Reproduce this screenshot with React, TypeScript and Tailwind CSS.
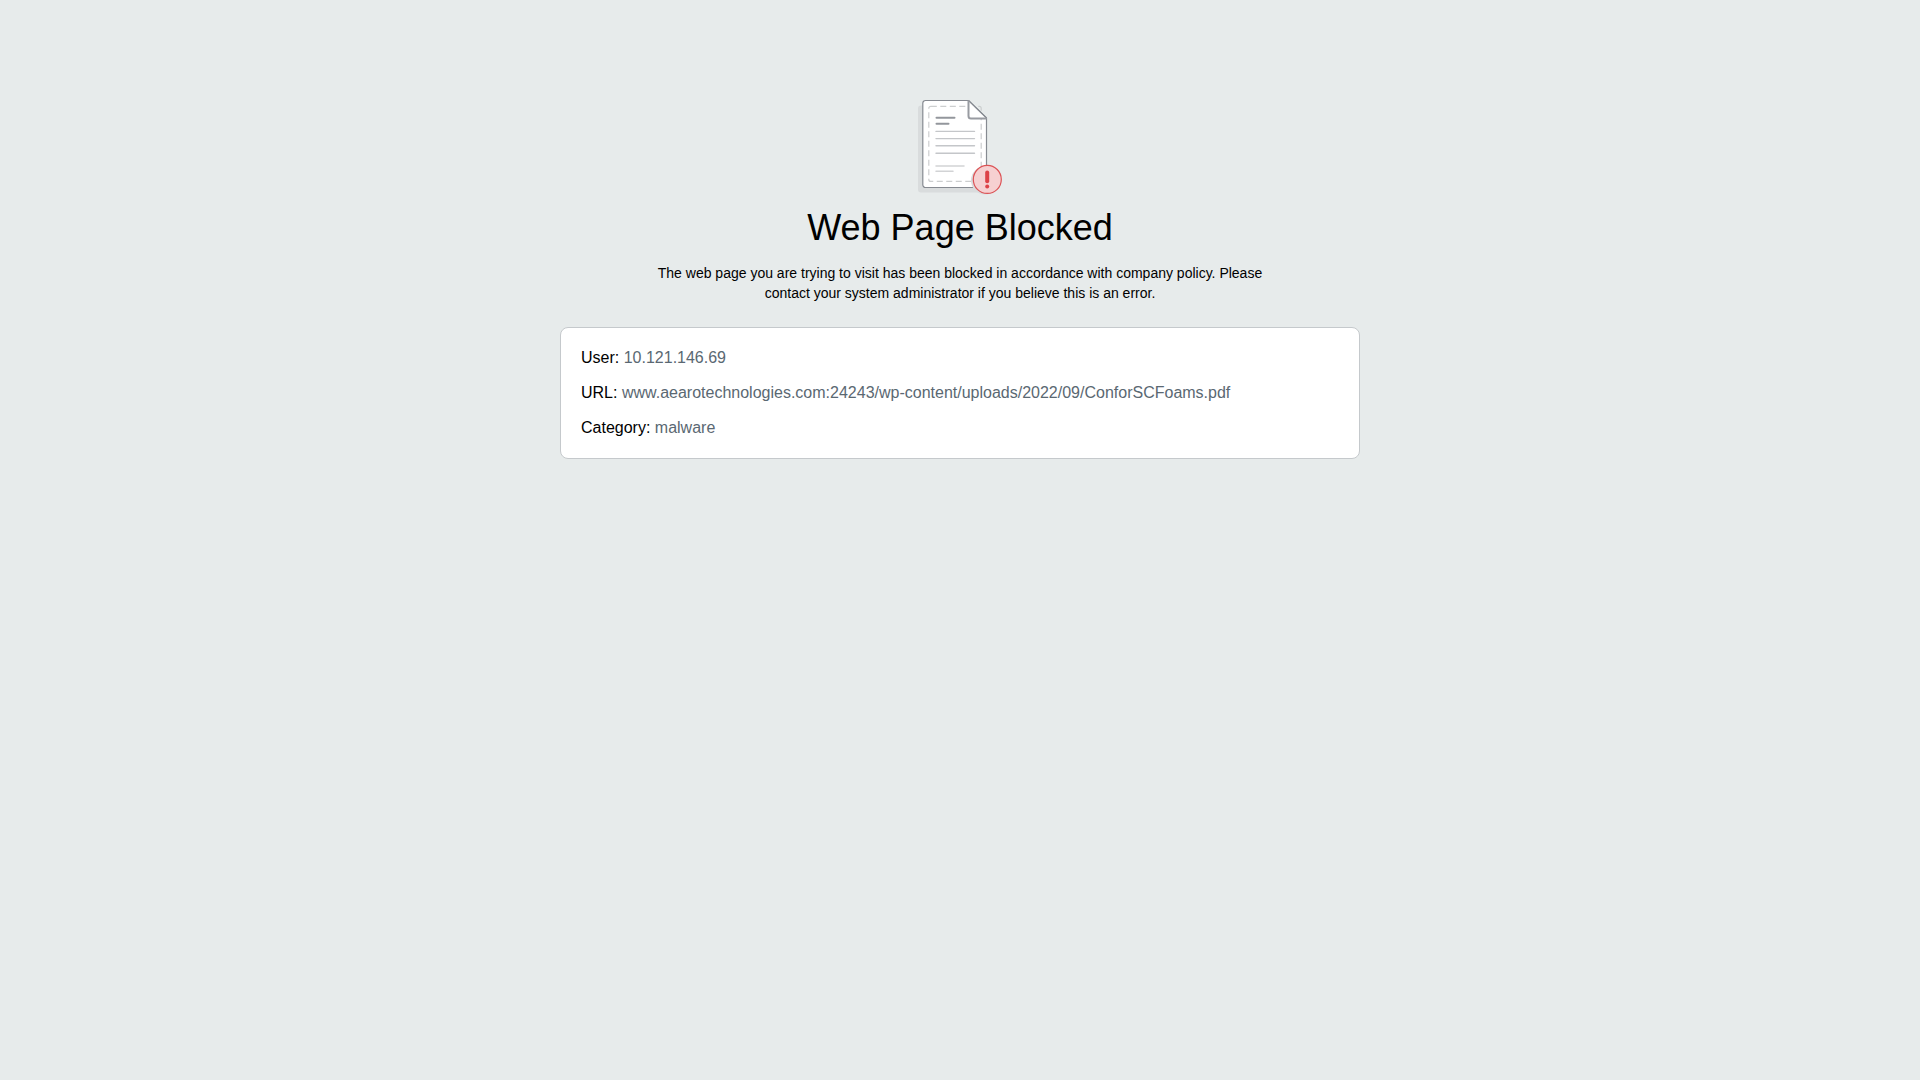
import { ReactNode } from "react";

function BlockedIcon() {
  return (
    <svg
      className="w-[84px] h-[100px]"
      viewBox="0 0 84 100"
      fill="none"
      aria-hidden="true"
    >
      <path
        d="M3 7.5H46L64 25V94.5H3a3 3 0 0 1-3-3V10.5a3 3 0 0 1 3-3Z"
        fill="#d9dcdd"
      />
      <path
        d="M7.5 2.5H50.5L68.5 20V89.5H7.5a2.7 2.7 0 0 1-2.7-2.7V5.2a2.7 2.7 0 0 1 2.7-2.7Z"
        fill="#fff"
        stroke="#868a91"
        strokeWidth="1.2"
      />
      <rect
        x="10.8"
        y="8.4"
        width="52.4"
        height="75"
        rx="2"
        stroke="#cccecf"
        strokeWidth="1.2"
        strokeDasharray="6 3.5"
      />
      <path d="M50.5 2.5V18a2.5 2.5 0 0 0 2.5 2.5H68.5Z" fill="#fff" />
      <path d="M50.5 2.5L68.5 20" stroke="#868a91" strokeWidth="1.2" />
      <path
        d="M50.5 2.5V18a2.5 2.5 0 0 0 2.5 2.5H68.5"
        stroke="#989ba1"
        strokeWidth="2"
      />
      <g strokeLinecap="round">
        <path d="M18.5 19.8H36.5M18.5 25.7H30.5" stroke="#93969c" strokeWidth="2" />
        <path
          d="M18 33.4H56.5M18 40.6H56.5M18 47.8H56.5M18 55.2H56.5"
          stroke="#c4c6c9"
          strokeWidth="1.4"
        />
        <path d="M18 68H46M18 73.3H35" stroke="#d2d3d5" strokeWidth="1.5" />
      </g>
      <circle cx="67" cy="82.5" r="14" fill="#d9dcdd" />
      <circle cx="69.3" cy="81.4" r="14" fill="#f6d0d1" stroke="#dc5356" strokeWidth="1.2" />
      <path d="M69.2 74.6V83.2" stroke="#dd4247" strokeWidth="4" strokeLinecap="round" />
      <circle cx="69.2" cy="88.6" r="2" fill="#dd4247" />
    </svg>
  );
}

function Detail({ label, children }: { label: string; children: ReactNode }) {
  return (
    <div className="break-words">
      <dt className="inline">{label}:</dt>{" "}
      <dd className="inline text-[#5a6872]">{children}</dd>
    </div>
  );
}

export default function App() {
  return (
    <div className="min-h-screen bg-[#e7ebeb] px-4 pt-[98px] pb-8 font-['Liberation_Sans',Arial,sans-serif] text-black">
      <main className="mx-auto flex max-w-[800px] flex-col items-center">
        <BlockedIcon />
        <h1 className="mt-2.5 text-center text-4xl">Web Page Blocked</h1>
        <p className="mt-[15px] max-w-[640px] text-center text-sm">
          The web page you are trying to visit has been blocked in accordance
          with company policy. Please contact your system administrator if you
          believe this is an error.
        </p>
        <dl className="mt-6 flex w-full flex-col gap-[15px] rounded-lg border border-[#c5c9cc] bg-white p-5 text-base/5">
          <Detail label="User">10.121.146.69</Detail>
          <Detail label="URL">
            www.aearotechnologies.com:24243/wp-content/uploads/2022/09/ConforSCFoams.pdf
          </Detail>
          <Detail label="Category">malware</Detail>
        </dl>
      </main>
    </div>
  );
}
